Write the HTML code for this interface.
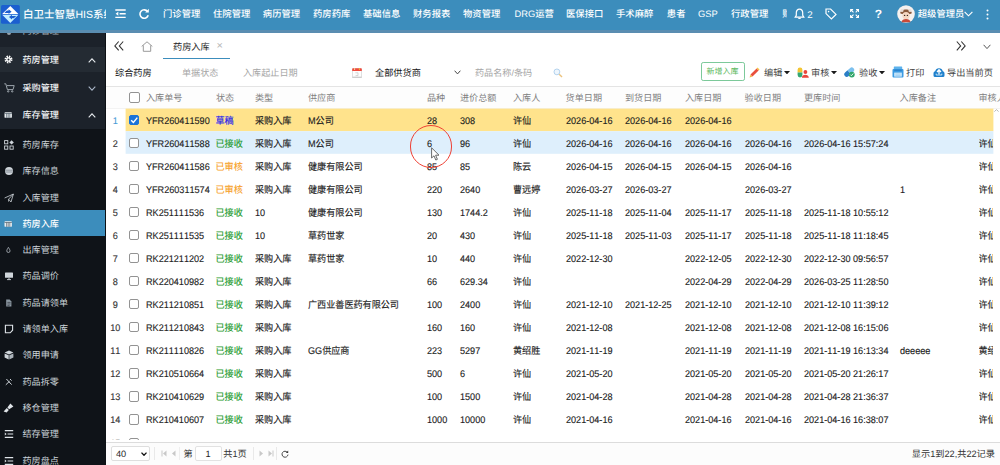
<!DOCTYPE html>
<html lang="zh-CN"><head><meta charset="utf-8"><title>药房入库</title><style>
*{box-sizing:border-box;margin:0;padding:0}
html,body{width:1000px;height:465px;overflow:hidden;background:#fff}
body{font-family:"Liberation Sans","Noto Sans CJK SC",sans-serif;font-size:9.1px;color:#222;position:relative;line-height:1;text-rendering:geometricPrecision;font-kerning:none}
.abs{position:absolute}
.t{position:absolute;white-space:nowrap;line-height:12px;height:12px;margin-top:-6px}
#hdr{position:absolute;left:0;top:0;width:1000px;height:33px;background:linear-gradient(#3c8dbc 0,#3c8dbc 29.5px,#5a8db1 29.8px,#5a8db1 33px);color:#fff;z-index:5}
#hdr .t{color:#fff;font-size:9.35px;font-weight:500}
#side{position:absolute;left:0;top:33px;width:106px;z-index:2;border-right:1.3px solid #0d1115;height:432px;background:#1c222a;overflow:hidden;color:#e8ecef}
#side .grp{position:absolute;left:0;width:105px;height:26.4px}
#side .sub{position:absolute;left:0;width:105px;background:#0f1318}
#side .t{color:#dfe4e8;font-size:9.1px;font-weight:500}
#side .act{position:absolute;left:0;width:105px;height:26.4px;background:#3c8dbc}
#main{position:absolute;left:105px;top:33px;width:895px;height:432px;background:#fff;overflow:hidden}
.hl{position:absolute;height:1px;background:#e6e6e6}
.row{position:absolute;left:0;width:895px;height:23.06px}
.row .t{color:#1c1c1c;transform:scaleY(1.06);-webkit-text-stroke:0.12px currentColor}
.cb{position:absolute;width:10.2px;height:10.2px;border:1px solid #939393;border-radius:2px;background:#fff}
.g{color:#1e9a2c !important}
.o{color:#f7a128 !important}
.b{color:#1c1cf0 !important}
.gray{color:#a6a6a6 !important}
</style></head><body>
<div id="hdr"><svg class="abs" style="left:1px;top:5px" width="18.8" height="18.8" viewBox="0 0 18.8 18.8">
<rect x="0" y="0" width="18.8" height="18.8" rx="1.6" fill="#1b5fd0"/>
<path d="M9.3 0.9L17.4 9.1H1.2Z" fill="#fff"/>
<path d="M9.3 17.9L1.2 9.7H17.4Z" fill="#c4efff"/>
<path d="M3.4 7.9H7.6V9.1L10.6 6.7L7.6 4.3V5.5L5.8 5.5Z" fill="#1b5fd0"/>
<path d="M15.2 10.9H11V9.7L8 12.1L11 14.5V13.3L12.8 13.3Z" fill="#1b5fd0"/>
</svg><div class="t" style="left:23px;top:14.5px;font-size:10.5px;width:82.5px;overflow:hidden;height:14px;margin-top:-7px;line-height:14px">白卫士智慧HIS系统</div><svg class="abs" style="left:115px;top:9px" width="11" height="9.4" viewBox="0 0 11 9.4" fill="none" stroke="#fff" stroke-width="1.5">
<path d="M0.3 1H10.7M4.6 4.7H10.7M0.3 8.4H10.7"/><path d="M3.3 2.7L0.6 4.7L3.3 6.7Z" fill="#fff" stroke="none"/></svg><svg class="abs" style="left:138.4px;top:8px" width="12" height="12" viewBox="0 0 12 12" fill="none" stroke="#fff" stroke-width="1.6">
<path d="M9.6 3.6A4.2 4.2 0 1 0 10.2 7.2"/><path d="M10.8 0.8V4.4H7.2Z" fill="#fff" stroke="none"/></svg><div class="t " style="left:163px;top:14.1px;">门诊管理</div><div class="t " style="left:213px;top:14.1px;">住院管理</div><div class="t " style="left:262.8px;top:14.1px;">病历管理</div><div class="t " style="left:313px;top:14.1px;">药房药库</div><div class="t " style="left:363px;top:14.1px;">基础信息</div><div class="t " style="left:413px;top:14.1px;">财务报表</div><div class="t " style="left:463px;top:14.1px;">物资管理</div><div class="t " style="left:514.4px;top:14.1px;">DRG运营</div><div class="t " style="left:566px;top:14.1px;">医保接口</div><div class="t " style="left:616px;top:14.1px;">手术麻醉</div><div class="t " style="left:666.8px;top:14.1px;">患者</div><div class="t " style="left:698px;top:14.1px;">GSP</div><div class="t " style="left:731px;top:14.1px;">行政管理</div><div class="t" style="left:782.3px;top:14.1px;width:5px;overflow:hidden">财</div><svg class="abs" style="left:794px;top:7.8px" width="11" height="12" viewBox="0 0 11 12" fill="none" stroke="#fff" stroke-width="1.2">
<path d="M5.5 1.2C3.4 1.2 2.3 2.8 2.3 4.8V7.4L1.2 9.2H9.8L8.7 7.4V4.8C8.7 2.8 7.6 1.2 5.5 1.2Z"/><path d="M4.3 10.4H6.7"/></svg><div class="t " style="left:807.3px;top:15.7px;font-size:9.8px;font-weight:400">2</div><svg class="abs" style="left:825px;top:8px" width="12" height="12" viewBox="0 0 12 12" fill="none" stroke="#fff" stroke-width="1.2">
<path d="M1 1H5.6L11 6.4L6.4 11L1 5.6Z"/><circle cx="3.6" cy="3.6" r="0.8" fill="#fff" stroke="none"/></svg><svg class="abs" style="left:850.3px;top:9.1px" width="9.2" height="9.2" viewBox="0 0 10 10" fill="none" stroke="#fff" stroke-width="1.15">
<path d="M0.7 3.4V0.7H3.4M6.6 0.7H9.3V3.4M9.3 6.6V9.3H6.6M3.4 9.3H0.7V6.6M0.7 0.7L3.8 3.8M9.3 0.7L6.2 3.8M9.3 9.3L6.2 6.2M0.7 9.3L3.8 6.2"/></svg><div class="t " style="left:874.8px;top:14.2px;font-size:12px;font-weight:bold">?</div><svg class="abs" style="left:897px;top:5px" width="18" height="18" viewBox="0 0 18 18">
<circle cx="9" cy="9" r="8.8" fill="#f6f1ee"/><path d="M3.2 8.2C3.6 3.4 14.4 3.4 14.8 8.2L13.2 9H4.8Z" fill="#8a5a3c"/><circle cx="5" cy="5.6" r="1.5" fill="#e9ddd6"/><circle cx="13" cy="5.6" r="1.5" fill="#e9ddd6"/><circle cx="9" cy="10.6" r="3.6" fill="#f5d7c2"/><path d="M4.6 17.2C4.6 13 13.4 13 13.4 17.2Z" fill="#c94a38"/><circle cx="7.6" cy="10.4" r="0.7" fill="#3a2a22"/><circle cx="10.4" cy="10.4" r="0.7" fill="#3a2a22"/></svg><div class="t " style="left:917.8px;top:14.2px;font-size:9.3px">超级管理员</div><svg class="abs" style="left:964.4px;top:11px" width="9" height="6" viewBox="0 0 9 6" fill="none" stroke="#fff" stroke-width="1.15"><path d="M0.6 0.8L4.5 4.8L8.4 0.8"/></svg><svg class="abs" style="left:986px;top:9px" width="3" height="11" viewBox="0 0 3 11" fill="#fff"><circle cx="1.5" cy="1.5" r="1"/><circle cx="1.5" cy="5.5" r="1"/><circle cx="1.5" cy="9.5" r="1"/></svg></div>
<div id="side"><div class="grp" style="top:13.6px;height:25.3px;background:#242b33"></div><div class="sub" style="top:96px;height:340px"></div><div class="act" style="top:177px"></div><div class="t " style="left:22.5px;top:-1.6px;opacity:.65">门诊管理</div><div class="abs" style="left:6.5px;top:0px;width:4px;height:2px;border-radius:0 0 2px 2px;background:#9aa3ab"></div><svg class="abs" style="left:4.3px;top:22.4px" width="9" height="9" viewBox="0 0 10 10"><circle cx="5" cy="5" r="3.2" fill="none" stroke="#fff" stroke-width="2.4" stroke-dasharray="1.5 1.02"/><circle cx="5" cy="5" r="2.6" fill="#fff"/><circle cx="5" cy="5" r="1.1" fill="#242b33"/></svg><div class="t " style="left:22.5px;top:27.4px;color:#f2f4f6">药房管理</div><svg class="abs" style="left:88px;top:24.9px" width="8" height="5" viewBox="0 0 8 5" fill="none" stroke="#e8ecef" stroke-width="1.1"><path d="M0.7 4.3L4 0.9L7.3 4.3"/></svg><svg class="abs" style="left:4px;top:50px" width="11" height="10" viewBox="0 0 11 10" fill="none" stroke="#aab3ba" stroke-width="0.9"><path d="M0.3 0.8H1.8L3.4 6.6H9L10.2 2.6H3"/><circle cx="4.2" cy="8.4" r="0.7"/><circle cx="8.2" cy="8.4" r="0.7"/></svg><div class="t " style="left:22.5px;top:55px;color:#f2f4f6">采购管理</div><svg class="abs" style="left:88px;top:52.5px" width="8" height="5" viewBox="0 0 8 5" fill="none" stroke="#a9b6c8" stroke-width="1.1"><path d="M0.7 0.7L4 4.1L7.3 0.7"/></svg><svg class="abs" style="left:4px;top:77px" width="9" height="10" viewBox="0 0 9 10"><rect x="0.5" y="2.2" width="7.4" height="5.6" rx="0.9" fill="#e9edf0"/><path d="M0.5 3.5H7.9M2.6 3.6V7.8M4.2 3.6V7.8M5.8 3.6V7.8" stroke="#2a3a48" stroke-width="0.55"/></svg><div class="t " style="left:22.5px;top:82px;color:#f2f4f6">库存管理</div><svg class="abs" style="left:88px;top:79.5px" width="8" height="5" viewBox="0 0 8 5" fill="none" stroke="#e8ecef" stroke-width="1.1"><path d="M0.7 4.3L4 0.9L7.3 4.3"/></svg><svg class="abs" style="left:4px;top:107px" width="10" height="10" viewBox="0 0 10 10" fill="none" stroke="#cfd5da" stroke-width="0.9"><rect x="0.6" y="0.6" width="3.2" height="3.2"/><rect x="0.6" y="6" width="3.2" height="3.2"/><rect x="6" y="6" width="3.2" height="3.2"/><path d="M7.6 0.2L9.8 2.4L7.6 4.6L5.4 2.4Z" fill="#cfd5da" stroke="none"/></svg><div class="t " style="left:22.5px;top:112px;font-weight:400;color:#ccd3d9">药房库存</div><svg class="abs" style="left:4px;top:133.3px" width="10" height="10" viewBox="0 0 10 10"><circle cx="5" cy="5" r="4" fill="#cfd5da"/><path d="M1.2 4.2H8.8M1.2 6H8.8" stroke="#59636c" stroke-width="0.6"/></svg><div class="t " style="left:22.5px;top:138.3px;font-weight:400;color:#ccd3d9">库存信息</div><svg class="abs" style="left:4px;top:159.5px" width="10" height="10" viewBox="0 0 10 10" fill="none" stroke="#cfd5da" stroke-width="0.8"><path d="M0.6 5L9.4 1L7 9L4.6 6.2L9.4 1M4.6 6.2V8.6"/></svg><div class="t " style="left:22.5px;top:164.5px;font-weight:400;color:#ccd3d9">入库管理</div><svg class="abs" style="left:4px;top:185.5px" width="9" height="10" viewBox="0 0 9 10"><rect x="0.5" y="2.2" width="7.4" height="5.6" rx="0.9" fill="#e9edf0"/><path d="M0.5 3.5H7.9M2.6 3.6V7.8M4.2 3.6V7.8M5.8 3.6V7.8" stroke="#2a3a48" stroke-width="0.55"/></svg><div class="t " style="left:22.5px;top:190.5px;font-weight:500;color:#fff">药房入库</div><svg class="abs" style="left:5px;top:212px" width="8" height="10" viewBox="0 0 8 10" fill="none" stroke="#b5bdc4" stroke-width="0.8"><path d="M3.4 2.4C2.4 4 1.8 4.9 1.8 5.9A1.6 1.6 0 0 0 5 5.9C5 4.9 4.4 4 3.4 2.4Z"/></svg><div class="t " style="left:22.5px;top:217px;font-weight:400;color:#ccd3d9">出库管理</div><svg class="abs" style="left:4px;top:238px" width="10" height="10" viewBox="0 0 10 10"><rect x="1" y="1.4" width="8" height="5.4" rx="0.6" fill="#cfd5da"/><path d="M3 8.6H7M5 6.8V8.6" stroke="#cfd5da" stroke-width="0.9"/></svg><div class="t " style="left:22.5px;top:243px;font-weight:400;color:#ccd3d9">药品调价</div><svg class="abs" style="left:5px;top:264.5px" width="8" height="10" viewBox="0 0 8 10"><path d="M1.2 1.6H4.6L6.4 3.4V8.6H1.2Z" fill="#8c98a2"/><path d="M2.4 4.4H5.6M2.4 6H5.6M2.4 7.6H4.6" stroke="#0f1318" stroke-width="0.5"/></svg><div class="t " style="left:22.5px;top:269.5px;font-weight:400;color:#ccd3d9">药品请领单</div><svg class="abs" style="left:4px;top:291px" width="10" height="10" viewBox="0 0 10 10" fill="none" stroke="#dfe4e8" stroke-width="1.1"><path d="M1.4 1.2H8.6V6.2L6.2 8.8H1.4Z"/></svg><div class="t " style="left:22.5px;top:296px;font-weight:400;color:#ccd3d9">请领单入库</div><svg class="abs" style="left:4px;top:317px" width="10" height="10" viewBox="0 0 10 10"><path d="M5 0.6L9.4 2.6L5 4.6L0.6 2.6Z" fill="#cfd5da"/><path d="M0.6 3.4L4.7 5.3V9.6L0.6 7.6Z" fill="#cfd5da"/><path d="M9.4 3.4L5.3 5.3V9.6L9.4 7.6Z" fill="#aab2b9"/></svg><div class="t " style="left:22.5px;top:322px;font-weight:400;color:#ccd3d9">领用申请</div><svg class="abs" style="left:4px;top:343.5px" width="10" height="10" viewBox="0 0 10 10" fill="none" stroke="#cfd5da" stroke-width="1"><path d="M1.8 7.8L5.6 4.2M2.4 2L7.6 7.6M6 2L7.6 3.6"/></svg><div class="t " style="left:22.5px;top:348.5px;font-weight:400;color:#ccd3d9">药品拆零</div><svg class="abs" style="left:3px;top:370px" width="11" height="10" viewBox="0 0 11 10"><path d="M7.4 0.4L10.4 3.4L6.2 6.2L4.4 4.4Z" fill="#dfe4e8"/><path d="M3.8 5L5.8 7L3.6 9.4L0.6 8.6Z" fill="#dfe4e8"/></svg><div class="t " style="left:22.5px;top:375px;font-weight:400;color:#ccd3d9">移仓管理</div><svg class="abs" style="left:4px;top:396px" width="10" height="10" viewBox="0 0 10 10" fill="none" stroke="#dfe4e8" stroke-width="1.1"><path d="M0.8 1.6H9.2M3.6 5H9.2M0.8 8.4H9.2"/><path d="M0.8 3.4L2.6 5L0.8 6.6Z" fill="#dfe4e8" stroke="none"/></svg><div class="t " style="left:22.5px;top:401px;font-weight:400;color:#ccd3d9">结存管理</div><svg class="abs" style="left:4px;top:422.5px" width="10" height="10" viewBox="0 0 10 10" fill="none" stroke="#dfe4e8" stroke-width="1.1"><path d="M0.8 1.6H9.2M3.6 5H9.2M0.8 8.4H9.2"/><path d="M0.8 3.4L2.6 5L0.8 6.6Z" fill="#dfe4e8" stroke="none"/></svg><div class="t " style="left:22.5px;top:427.5px;font-weight:400;color:#ccd3d9">药房盘点</div></div>
<div id="main"><svg class="abs" style="left:9.2px;top:8.1px" width="10" height="9.8" viewBox="0 0 10 10.4" preserveAspectRatio="none" fill="none" stroke="#333" stroke-width="1.05"><path d="M4.7 0.5L0.8 5.2L4.7 9.9M9.2 0.5L5.3 5.2L9.2 9.9"/></svg><svg class="abs" style="left:36.3px;top:7.6px" width="12" height="11" viewBox="0 0 12 11" fill="none" stroke="#8e8e8e" stroke-width="0.9"><path d="M0.7 5.4L6 0.8L11.3 5.4M2.3 4.4V10.3H9.7V4.4"/></svg><div class="t " style="left:68px;top:13.7px;color:#222;font-size:9.2px">药房入库</div><div class="t " style="left:111.5px;top:12.6px;color:#b8b8b8;font-size:11px">×</div><div class="abs" style="left:58px;top:25px;width:67px;height:1.3px;background:#3c8dbc"></div><svg class="abs" style="left:850.8px;top:8.1px" width="10" height="9.8" viewBox="0 0 10 10.4" preserveAspectRatio="none" fill="none" stroke="#333" stroke-width="1.05"><path d="M0.8 0.5L4.7 5.2L0.8 9.9M5.3 0.5L9.2 5.2L5.3 9.9"/></svg><svg class="abs" style="left:878px;top:10.5px" width="8" height="6" viewBox="0 0 8 6" fill="none" stroke="#555" stroke-width="1"><path d="M0.6 0.8L4 4.6L7.4 0.8"/></svg><div class="t " style="left:10px;top:39.5px;color:#111;font-size:9.2px">综合药房</div><div class="t gray" style="left:77px;top:39.5px;">单据状态</div><div class="t gray" style="left:138px;top:39.5px;">入库起止日期</div><svg class="abs" style="left:246.8px;top:34.6px" width="10" height="10.4" viewBox="0 0 10 10.4"><rect x="0.4" y="0.4" width="9.2" height="9.4" rx="0.9" fill="#fdfdfd" stroke="#cfcfcf" stroke-width="0.7"/><path d="M0.4 9.2H9.6" stroke="#bdbdbd" stroke-width="0.9"/><path d="M0.2 1.1A0.9 0.9 0 0 1 1.1 0.2H8.9A0.9 0.9 0 0 1 9.8 1.1V3H0.2Z" fill="#ef4a3c"/><rect x="2" y="0.2" width="1.1" height="1.7" fill="#f6d9a0"/><rect x="6.9" y="0.2" width="1.1" height="1.7" fill="#f3b63e"/><path d="M3.4 4.8H6V7.6H3.6" fill="none" stroke="#c4c4c4" stroke-width="0.7"/></svg><div class="t " style="left:270px;top:39.5px;color:#111;font-size:9.2px">全部供货商</div><svg class="abs" style="left:348.6px;top:37.4px" width="7" height="5" viewBox="0 0 7 5" fill="none" stroke="#444" stroke-width="1"><path d="M0.6 0.7L3.5 3.9L6.4 0.7"/></svg><div class="t gray" style="left:370px;top:39.5px;">药品名称/条码</div><svg class="abs" style="left:448px;top:35.2px" width="10" height="10" viewBox="0 0 10 10" fill="none"><circle cx="3.9" cy="3.9" r="2.9" stroke="#b4d3ee" stroke-width="1" fill="#eef6fd"/><path d="M6.2 6.2L9 9" stroke="#ecc27c" stroke-width="1.4"/></svg><div class="abs" style="left:596px;top:29.4px;width:44px;height:18.4px;border:1.2px solid #7cc99a;border-radius:2.2px"></div><div class="t " style="left:601.6px;top:38.8px;color:#5bb85c;font-size:8px">新增入库</div><svg class="abs" style="left:644.2px;top:34.3px" width="11" height="11" viewBox="0 0 11 11"><path d="M0.6 10.4L1.5 7.5L3.5 9.5Z" fill="#f2b544"/><path d="M1.5 7.5L7.6 1.4L9.6 3.4L3.5 9.5Z" fill="#e94f3d"/><path d="M7.6 1.4L8.5 0.5L10.5 2.5L9.6 3.4Z" fill="#f6c443"/></svg><div class="t " style="left:659px;top:39.5px;color:#444;font-size:9.2px">编辑</div><svg class="abs" style="left:678.5px;top:38px" width="6" height="3.4" viewBox="0 0 6 3.4"><path d="M0 0H6L3 3.4Z" fill="#1a1a1a"/></svg><svg class="abs" style="left:691.6px;top:34.2px" width="12" height="11" viewBox="0 0 12 11"><path d="M0.6 5.4V2.8A2.4 2.4 0 0 1 5.4 2.8V5.4Z" fill="#f3c532"/><path d="M0.6 5.4V8A2.4 2.4 0 0 0 5.4 8V5.4Z" fill="#35a873"/><circle cx="8.4" cy="5" r="1.9" fill="#e9453a"/><path d="M4.8 10.8C4.8 6.6 11.8 6.6 11.8 10.8Z" fill="#e9453a"/></svg><div class="t " style="left:706px;top:39.5px;color:#444;font-size:9.2px">审核</div><svg class="abs" style="left:725.5px;top:38px" width="6" height="3.4" viewBox="0 0 6 3.4"><path d="M0 0H6L3 3.4Z" fill="#1a1a1a"/></svg><svg class="abs" style="left:739.2px;top:34.2px" width="11.5" height="11" viewBox="0 0 11.5 11"><g transform="rotate(-42 5.2 5.2)"><path d="M-0.6 5.2A2.5 2.5 0 0 1 1.9 2.7H5.2V7.7H1.9A2.5 2.5 0 0 1 -0.6 5.2Z" fill="#2a7ec6"/><path d="M5.2 2.7H8.5A2.5 2.5 0 0 1 8.5 7.7H5.2Z" fill="#7cc0ee"/></g><circle cx="7.8" cy="7.6" r="2.9" fill="#2fa56b"/><path d="M6.3 7.6L7.4 8.7L9.3 6.5" stroke="#fff" stroke-width="0.9" fill="none"/></svg><div class="t " style="left:754px;top:39.5px;color:#444;font-size:9.2px">验收</div><svg class="abs" style="left:774px;top:38px" width="6" height="3.4" viewBox="0 0 6 3.4"><path d="M0 0H6L3 3.4Z" fill="#1a1a1a"/></svg><svg class="abs" style="left:786.6px;top:33.4px" width="12" height="12" viewBox="0 0 12 12"><rect x="1.8" y="0.4" width="8.4" height="3.6" rx="0.6" fill="#5db2ec"/><rect x="0.5" y="3" width="11" height="8.4" rx="1" fill="#3a9ae2"/><rect x="2.2" y="3.6" width="7.6" height="1.2" fill="#2a7ec6"/><rect x="2.2" y="6.6" width="7.6" height="4" fill="#d4ecfb"/><path d="M3.4 8H8.6M3.4 9.4H8.6" stroke="#7cc0ee" stroke-width="0.6"/></svg><div class="t " style="left:801px;top:39.5px;color:#444;font-size:9.2px">打印</div><svg class="abs" style="left:827.5px;top:34.2px" width="12" height="10.5" viewBox="0 0 12 10.5"><path d="M0.5 6.4C0.5 5 1.3 4.4 2.2 4.2A3.9 3.9 0 0 1 9.8 4.2C10.7 4.4 11.5 5 11.5 6.4V8.4A1.6 1.6 0 0 1 9.9 10H2.1A1.6 1.6 0 0 1 0.5 8.4Z" fill="#1f80cc"/><path d="M6 7.6V3.2M4 5L6 2.8L8 5" stroke="#fff" stroke-width="1.3" fill="none"/><path d="M3.2 6.6V8H8.8V6.6" stroke="#d4ecfb" stroke-width="0.9" fill="none"/></svg><div class="t " style="left:842px;top:39.5px;color:#444;font-size:9.2px">导出当前页</div><div class="hl" style="left:0;top:52.5px;width:895px;background:#e4e4e4"></div><div class="abs" style="left:0;top:53.5px;width:895px;height:22px;background:#fdfdfd"></div><div class="cb" style="left:24.2px;top:59.1px;width:10.8px;height:10.6px"></div><div class="t " style="left:41px;top:64.5px;color:#808080;font-size:9.1px">入库单号</div><div class="t " style="left:111px;top:64.5px;color:#808080;font-size:9.1px">状态</div><div class="t " style="left:150px;top:64.5px;color:#808080;font-size:9.1px">类型</div><div class="t " style="left:203px;top:64.5px;color:#808080;font-size:9.1px">供应商</div><div class="t " style="left:322px;top:64.5px;color:#808080;font-size:9.1px">品种</div><div class="t " style="left:355px;top:64.5px;color:#808080;font-size:9.1px">进价总额</div><div class="t " style="left:408px;top:64.5px;color:#808080;font-size:9.1px">入库人</div><div class="t " style="left:460.6px;top:64.5px;color:#808080;font-size:9.1px">货单日期</div><div class="t " style="left:520px;top:64.5px;color:#808080;font-size:9.1px">到货日期</div><div class="t " style="left:580px;top:64.5px;color:#808080;font-size:9.1px">入库日期</div><div class="t " style="left:639.6px;top:64.5px;color:#808080;font-size:9.1px">验收日期</div><div class="t " style="left:699px;top:64.5px;color:#808080;font-size:9.1px">更库时间</div><div class="t " style="left:794.6px;top:64.5px;color:#808080;font-size:9.1px">入库备注</div><div class="t " style="left:873.5px;top:64.5px;color:#808080;font-size:9.1px">审核人</div><div class="hl" style="left:0;top:75px;width:895px;background:#f3f3f3"></div><svg class="abs" style="left:20px;top:75px" width="875" height="48" viewBox="0 0 875 48"><rect x="0.6" y="0.6" width="867.8" height="22.6" fill="#ffe38c"/><rect x="0.6" y="23.2" width="867.8" height="22.6" fill="#deeffc"/></svg><div class="row" style="top:75.5px"><div class="t" style="left:0;top:12.1px;width:20.6px;text-align:center;color:#4a9bd6">1</div><div class="cb" style="left:24.3px;top:6.2px;background:#1a73d8;border-color:#1a73d8"></div><svg class="abs" style="left:24.3px;top:6.2px" width="10.4" height="10.4" viewBox="0 0 9 9" fill="none" stroke="#fff" stroke-width="1.2"><path d="M1.9 4.6L3.8 6.5L7.2 2.3"/></svg><div class="t " style="left:41px;top:12.15px;">YFR260411590</div><div class="t b" style="left:110.5px;top:12.15px;">草稿</div><div class="t " style="left:150px;top:12.15px;">采购入库</div><div class="t " style="left:203px;top:12.15px;">M公司</div><div class="t " style="left:322px;top:12.15px;">28</div><div class="t " style="left:355px;top:12.15px;">308</div><div class="t " style="left:408px;top:12.15px;">许仙</div><div class="t " style="left:461px;top:12.15px;">2026-04-16</div><div class="t " style="left:520px;top:12.15px;">2026-04-16</div><div class="t " style="left:580px;top:12.15px;">2026-04-16</div></div><div class="row" style="top:98.56px"><div class="t" style="left:0;top:12.1px;width:20.6px;text-align:center;color:#333">2</div><div class="cb" style="left:24.3px;top:6.2px"></div><div class="t " style="left:41px;top:12.15px;">YFR260411588</div><div class="t g" style="left:110.5px;top:12.15px;">已接收</div><div class="t " style="left:150px;top:12.15px;">采购入库</div><div class="t " style="left:203px;top:12.15px;">M公司</div><div class="t " style="left:322px;top:12.15px;">6</div><div class="t " style="left:355px;top:12.15px;">96</div><div class="t " style="left:408px;top:12.15px;">许仙</div><div class="t " style="left:461px;top:12.15px;">2026-04-16</div><div class="t " style="left:520px;top:12.15px;">2026-04-16</div><div class="t " style="left:580px;top:12.15px;">2026-04-16</div><div class="t " style="left:640px;top:12.15px;">2026-04-16</div><div class="t " style="left:699px;top:12.15px;">2026-04-16 15:57:24</div><div class="t " style="left:873.5px;top:12.15px;width:14.7px;overflow:hidden">许仙</div></div><div class="row" style="top:121.62px"><div class="t" style="left:0;top:12.1px;width:20.6px;text-align:center;color:#333">3</div><div class="cb" style="left:24.3px;top:6.2px"></div><div class="t " style="left:41px;top:12.15px;">YFR260411586</div><div class="t o" style="left:110.5px;top:12.15px;">已审核</div><div class="t " style="left:150px;top:12.15px;">采购入库</div><div class="t " style="left:203px;top:12.15px;">健康有限公司</div><div class="t " style="left:322px;top:12.15px;">85</div><div class="t " style="left:355px;top:12.15px;">85</div><div class="t " style="left:408px;top:12.15px;">陈云</div><div class="t " style="left:461px;top:12.15px;">2026-04-15</div><div class="t " style="left:520px;top:12.15px;">2026-04-15</div><div class="t " style="left:580px;top:12.15px;">2026-04-15</div><div class="t " style="left:640px;top:12.15px;">2026-04-16</div><div class="t " style="left:873.5px;top:12.15px;width:14.7px;overflow:hidden">许仙</div></div><div class="row" style="top:144.68px"><div class="t" style="left:0;top:12.1px;width:20.6px;text-align:center;color:#333">4</div><div class="cb" style="left:24.3px;top:6.2px"></div><div class="t " style="left:41px;top:12.15px;">YFR260311574</div><div class="t o" style="left:110.5px;top:12.15px;">已审核</div><div class="t " style="left:150px;top:12.15px;">采购入库</div><div class="t " style="left:203px;top:12.15px;">健康有限公司</div><div class="t " style="left:322px;top:12.15px;">220</div><div class="t " style="left:355px;top:12.15px;">2640</div><div class="t " style="left:408px;top:12.15px;">曹远婷</div><div class="t " style="left:461px;top:12.15px;">2026-03-27</div><div class="t " style="left:520px;top:12.15px;">2026-03-27</div><div class="t " style="left:640px;top:12.15px;">2026-03-27</div><div class="t " style="left:795px;top:12.15px;">1</div><div class="t " style="left:873.5px;top:12.15px;width:14.7px;overflow:hidden">许仙</div></div><div class="row" style="top:167.74px"><div class="t" style="left:0;top:12.1px;width:20.6px;text-align:center;color:#333">5</div><div class="cb" style="left:24.3px;top:6.2px"></div><div class="t " style="left:41px;top:12.15px;">RK251111536</div><div class="t g" style="left:110.5px;top:12.15px;">已接收</div><div class="t " style="left:150px;top:12.15px;">10</div><div class="t " style="left:203px;top:12.15px;">健康有限公司</div><div class="t " style="left:322px;top:12.15px;">130</div><div class="t " style="left:355px;top:12.15px;">1744.2</div><div class="t " style="left:408px;top:12.15px;">许仙</div><div class="t " style="left:461px;top:12.15px;">2025-11-18</div><div class="t " style="left:520px;top:12.15px;">2025-11-04</div><div class="t " style="left:580px;top:12.15px;">2025-11-17</div><div class="t " style="left:640px;top:12.15px;">2025-11-18</div><div class="t " style="left:699px;top:12.15px;">2025-11-18 10:55:12</div><div class="t " style="left:873.5px;top:12.15px;width:14.7px;overflow:hidden">许仙</div></div><div class="row" style="top:190.8px"><div class="t" style="left:0;top:12.1px;width:20.6px;text-align:center;color:#333">6</div><div class="cb" style="left:24.3px;top:6.2px"></div><div class="t " style="left:41px;top:12.15px;">RK251111535</div><div class="t g" style="left:110.5px;top:12.15px;">已接收</div><div class="t " style="left:150px;top:12.15px;">10</div><div class="t " style="left:203px;top:12.15px;">草药世家</div><div class="t " style="left:322px;top:12.15px;">20</div><div class="t " style="left:355px;top:12.15px;">430</div><div class="t " style="left:408px;top:12.15px;">许仙</div><div class="t " style="left:461px;top:12.15px;">2025-11-18</div><div class="t " style="left:520px;top:12.15px;">2025-11-03</div><div class="t " style="left:580px;top:12.15px;">2025-11-17</div><div class="t " style="left:640px;top:12.15px;">2025-11-18</div><div class="t " style="left:699px;top:12.15px;">2025-11-18 11:18:45</div><div class="t " style="left:873.5px;top:12.15px;width:14.7px;overflow:hidden">许仙</div></div><div class="row" style="top:213.86px"><div class="t" style="left:0;top:12.1px;width:20.6px;text-align:center;color:#333">7</div><div class="cb" style="left:24.3px;top:6.2px"></div><div class="t " style="left:41px;top:12.15px;">RK221211202</div><div class="t g" style="left:110.5px;top:12.15px;">已接收</div><div class="t " style="left:150px;top:12.15px;">采购入库</div><div class="t " style="left:203px;top:12.15px;">草药世家</div><div class="t " style="left:322px;top:12.15px;">10</div><div class="t " style="left:355px;top:12.15px;">440</div><div class="t " style="left:408px;top:12.15px;">许仙</div><div class="t " style="left:461px;top:12.15px;">2022-12-30</div><div class="t " style="left:580px;top:12.15px;">2022-12-05</div><div class="t " style="left:640px;top:12.15px;">2022-12-30</div><div class="t " style="left:699px;top:12.15px;">2022-12-30 09:56:57</div><div class="t " style="left:873.5px;top:12.15px;width:14.7px;overflow:hidden">许仙</div></div><div class="row" style="top:236.92px"><div class="t" style="left:0;top:12.1px;width:20.6px;text-align:center;color:#333">8</div><div class="cb" style="left:24.3px;top:6.2px"></div><div class="t " style="left:41px;top:12.15px;">RK220410982</div><div class="t g" style="left:110.5px;top:12.15px;">已接收</div><div class="t " style="left:150px;top:12.15px;">采购入库</div><div class="t " style="left:322px;top:12.15px;">66</div><div class="t " style="left:355px;top:12.15px;">629.34</div><div class="t " style="left:408px;top:12.15px;">许仙</div><div class="t " style="left:580px;top:12.15px;">2022-04-29</div><div class="t " style="left:640px;top:12.15px;">2022-04-29</div><div class="t " style="left:699px;top:12.15px;">2026-03-25 11:28:50</div><div class="t " style="left:873.5px;top:12.15px;width:14.7px;overflow:hidden">许仙</div></div><div class="row" style="top:259.98px"><div class="t" style="left:0;top:12.1px;width:20.6px;text-align:center;color:#333">9</div><div class="cb" style="left:24.3px;top:6.2px"></div><div class="t " style="left:41px;top:12.15px;">RK211210851</div><div class="t g" style="left:110.5px;top:12.15px;">已接收</div><div class="t " style="left:150px;top:12.15px;">采购入库</div><div class="t " style="left:203px;top:12.15px;">广西业善医药有限公司</div><div class="t " style="left:322px;top:12.15px;">100</div><div class="t " style="left:355px;top:12.15px;">2400</div><div class="t " style="left:408px;top:12.15px;">许仙</div><div class="t " style="left:461px;top:12.15px;">2021-12-10</div><div class="t " style="left:520px;top:12.15px;">2021-12-25</div><div class="t " style="left:580px;top:12.15px;">2021-12-10</div><div class="t " style="left:640px;top:12.15px;">2021-12-10</div><div class="t " style="left:699px;top:12.15px;">2021-12-10 11:39:12</div><div class="t " style="left:873.5px;top:12.15px;width:14.7px;overflow:hidden">许仙</div></div><div class="row" style="top:283.04px"><div class="t" style="left:0;top:12.1px;width:20.6px;text-align:center;color:#333">10</div><div class="cb" style="left:24.3px;top:6.2px"></div><div class="t " style="left:41px;top:12.15px;">RK211210843</div><div class="t g" style="left:110.5px;top:12.15px;">已接收</div><div class="t " style="left:150px;top:12.15px;">采购入库</div><div class="t " style="left:322px;top:12.15px;">160</div><div class="t " style="left:355px;top:12.15px;">160</div><div class="t " style="left:408px;top:12.15px;">许仙</div><div class="t " style="left:461px;top:12.15px;">2021-12-08</div><div class="t " style="left:580px;top:12.15px;">2021-12-08</div><div class="t " style="left:640px;top:12.15px;">2021-12-08</div><div class="t " style="left:699px;top:12.15px;">2021-12-08 16:15:06</div><div class="t " style="left:873.5px;top:12.15px;width:14.7px;overflow:hidden">许仙</div></div><div class="row" style="top:306.1px"><div class="t" style="left:0;top:12.1px;width:20.6px;text-align:center;color:#333">11</div><div class="cb" style="left:24.3px;top:6.2px"></div><div class="t " style="left:41px;top:12.15px;">RK211110826</div><div class="t g" style="left:110.5px;top:12.15px;">已接收</div><div class="t " style="left:150px;top:12.15px;">采购入库</div><div class="t " style="left:203px;top:12.15px;">GG供应商</div><div class="t " style="left:322px;top:12.15px;">223</div><div class="t " style="left:355px;top:12.15px;">5297</div><div class="t " style="left:408px;top:12.15px;">黄绍胜</div><div class="t " style="left:461px;top:12.15px;">2021-11-19</div><div class="t " style="left:580px;top:12.15px;">2021-11-19</div><div class="t " style="left:640px;top:12.15px;">2021-11-19</div><div class="t " style="left:699px;top:12.15px;">2021-11-19 16:13:34</div><div class="t " style="left:795px;top:12.15px;">deeeee</div><div class="t " style="left:873.5px;top:12.15px;width:14.7px;overflow:hidden">黄绍胜</div></div><div class="row" style="top:329.16px"><div class="t" style="left:0;top:12.1px;width:20.6px;text-align:center;color:#333">12</div><div class="cb" style="left:24.3px;top:6.2px"></div><div class="t " style="left:41px;top:12.15px;">RK210510664</div><div class="t g" style="left:110.5px;top:12.15px;">已接收</div><div class="t " style="left:150px;top:12.15px;">采购入库</div><div class="t " style="left:322px;top:12.15px;">500</div><div class="t " style="left:355px;top:12.15px;">6</div><div class="t " style="left:408px;top:12.15px;">许仙</div><div class="t " style="left:461px;top:12.15px;">2021-05-20</div><div class="t " style="left:580px;top:12.15px;">2021-05-20</div><div class="t " style="left:640px;top:12.15px;">2021-05-20</div><div class="t " style="left:699px;top:12.15px;">2021-05-20 21:26:17</div><div class="t " style="left:873.5px;top:12.15px;width:14.7px;overflow:hidden">许仙</div></div><div class="row" style="top:352.22px"><div class="t" style="left:0;top:12.1px;width:20.6px;text-align:center;color:#333">13</div><div class="cb" style="left:24.3px;top:6.2px"></div><div class="t " style="left:41px;top:12.15px;">RK210410629</div><div class="t g" style="left:110.5px;top:12.15px;">已接收</div><div class="t " style="left:150px;top:12.15px;">采购入库</div><div class="t " style="left:322px;top:12.15px;">100</div><div class="t " style="left:355px;top:12.15px;">1500</div><div class="t " style="left:408px;top:12.15px;">许仙</div><div class="t " style="left:461px;top:12.15px;">2021-04-28</div><div class="t " style="left:580px;top:12.15px;">2021-04-28</div><div class="t " style="left:640px;top:12.15px;">2021-04-28</div><div class="t " style="left:699px;top:12.15px;">2021-04-28 21:36:37</div><div class="t " style="left:873.5px;top:12.15px;width:14.7px;overflow:hidden">许仙</div></div><div class="row" style="top:375.28px"><div class="t" style="left:0;top:12.1px;width:20.6px;text-align:center;color:#333">14</div><div class="cb" style="left:24.3px;top:6.2px"></div><div class="t " style="left:41px;top:12.15px;">RK210410607</div><div class="t g" style="left:110.5px;top:12.15px;">已接收</div><div class="t " style="left:150px;top:12.15px;">采购入库</div><div class="t " style="left:322px;top:12.15px;">1000</div><div class="t " style="left:355px;top:12.15px;">10000</div><div class="t " style="left:408px;top:12.15px;">许仙</div><div class="t " style="left:461px;top:12.15px;">2021-04-16</div><div class="t " style="left:580px;top:12.15px;">2021-04-16</div><div class="t " style="left:640px;top:12.15px;">2021-04-16</div><div class="t " style="left:699px;top:12.15px;">2021-04-16 16:38:07</div><div class="t " style="left:873.5px;top:12.15px;width:14.7px;overflow:hidden">许仙</div></div><div class="abs" style="left:0;top:398.34px;width:895px;height:8.5px;overflow:hidden"><div class="t" style="left:0px;top:11.5px;width:20.6px;text-align:center;color:#333">15</div><div class="cb" style="left:24.3px;top:6.2px"></div></div><div class="abs" style="left:0;top:408.8px;width:895px;height:24px;background:#fcfcfc;border-top:1px solid #dcdcdc"></div><div class="abs" style="left:5.5px;top:413px;width:39px;height:15px;border:1px solid #dedede;border-radius:2px;background:#fff"></div><div class="t " style="left:11px;top:420.5px;color:#222;font-size:9.2px">40</div><svg class="abs" style="left:35.6px;top:419px" width="6" height="4" viewBox="0 0 6 4" fill="none" stroke="#111" stroke-width="1.3"><path d="M0.5 0.6L3 3.3L5.5 0.6"/></svg><div class="abs" style="left:49px;top:414px;width:1px;height:13px;background:#e9e9e9"></div><div class="abs" style="left:73.5px;top:414px;width:1px;height:13px;background:#eee"></div><svg class="abs" style="left:56px;top:417px" width="16" height="7" viewBox="0 0 16 7" fill="#c8c8c8"><rect x="0.5" y="0.5" width="1" height="6"/><path d="M5.5 0.5V6.5L2 3.5Z"/><path d="M14.5 0.5V6.5L11 3.5Z"/></svg><div class="t " style="left:78.4px;top:420.5px;color:#333;font-size:9.2px">第</div><div class="abs" style="left:89.8px;top:413px;width:27px;height:15px;border:1px solid #e2e2e2;border-radius:2px;background:#fff"></div><div class="t " style="left:100.5px;top:420.5px;color:#222;font-size:9.2px">1</div><div class="t " style="left:118.3px;top:420.5px;color:#333;font-size:9.2px">共1页</div><div class="abs" style="left:147.7px;top:414px;width:1px;height:13px;background:#e9e9e9"></div><svg class="abs" style="left:153px;top:417px" width="16" height="7" viewBox="0 0 16 7" fill="#c8c8c8"><path d="M1.5 0.5V6.5L5 3.5Z"/><path d="M10.5 0.5V6.5L14 3.5Z"/><rect x="14.5" y="0.5" width="1" height="6"/></svg><div class="abs" style="left:171.4px;top:414px;width:1px;height:13px;background:#e9e9e9"></div><svg class="abs" style="left:176px;top:416.5px" width="8" height="8" viewBox="0 0 8 8" fill="none" stroke="#333" stroke-width="0.9"><path d="M6.4 2.4A3 3 0 1 0 7 4.6"/><path d="M7.2 0.6V3H4.8Z" fill="#333" stroke="none"/></svg><div class="t" style="right:5px;top:420.5px;color:#333;font-size:9.2px">显示1到22,共22记录</div><svg class="abs" style="left:889.3px;top:75.6px" width="5" height="3" viewBox="0 0 5 3" fill="none" stroke="#999" stroke-width="0.7"><path d="M0.4 2.6L2.5 0.6L4.6 2.6"/></svg><div class="abs" style="left:304.5px;top:91.8px;width:42.8px;height:42.8px;border:1px solid #ee4034;border-radius:50%"></div><svg class="abs" style="left:325.8px;top:113.6px" width="9" height="14" viewBox="0 0 9 14"><path d="M0.6 0.8V11L3 8.8L4.8 13L6.4 12.3L4.6 8.2H8Z" fill="#fff" stroke="#5a5a5a" stroke-width="0.9"/></svg></div>
</body></html>
